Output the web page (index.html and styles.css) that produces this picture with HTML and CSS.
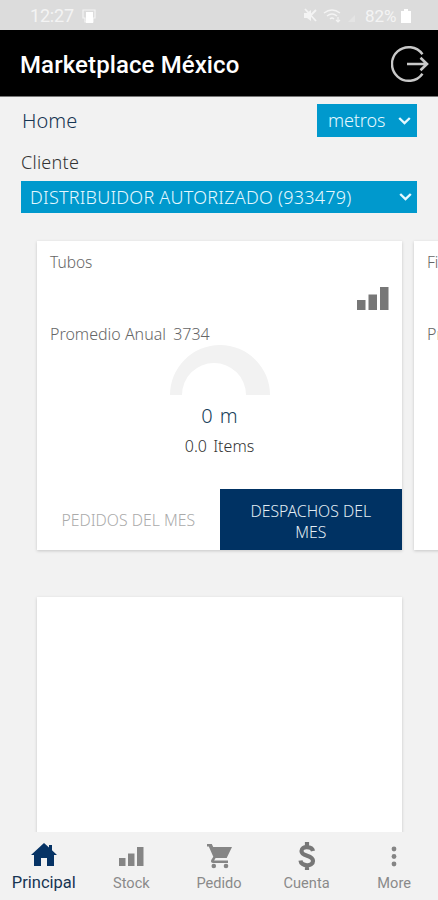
FILE: index.html
```html
<!DOCTYPE html>
<html lang="es">
<head>
<meta charset="utf-8">
<meta name="viewport" content="width=device-width, initial-scale=1">
<title>Marketplace México</title>
<link rel="stylesheet" href="styles.css">
</head>
<body>
<div class="app">
  <div class="status">
    <span class="clock">12:27</span>
    <svg class="note" width="16" height="17" viewBox="0 0 16 17"><path d="M2 2h12v8h-2v4H4v-4H2z" fill="none" stroke="#f4f4f4" stroke-width="1.2"/><path d="M5 4h7v11H5z" fill="#fff"/></svg>
    <svg class="signals" width="56" height="18" viewBox="0 0 56 18" fill="none" stroke="#f4f4f4"><path d="M1 6h3l4-3v11l-4-3H1z" fill="#f4f4f4" stroke="none"/><path d="M2 2l11 12M8 8l5-5" stroke-width="1.8"/><path d="M21 6q8-6 16 0M24 9q5-4 10 0M27 12q2-2 4 0" stroke-width="1.4"/><path d="M35 10v5m-2-2l2 2 2-2" stroke-width="1.2"/><path d="M45 15h7V8z" fill="#e4e4e4" stroke="none"/></svg>
    <span class="percent">82%</span>
    <svg class="battery" width="10" height="14" viewBox="0 0 10 14"><path d="M3 0h4v2h3v12H0V2h3z" fill="#fff"/></svg>
  </div>
  <header class="header">
    <h1 class="title">Marketplace México</h1>
    <svg class="logout" width="38" height="38" viewBox="0 0 38 38" fill="none" stroke="#c8c8c8" stroke-width="2.4"><path d="M31.500 9.300A16.800 16.800 0 1 0 31.500 28.700"/><path d="M16 19h20M29.500 12.800l6.500 6.200-6.500 6.200" stroke-width="2.6"/></svg>
  </header>
  <main class="content">
    <div class="row">
      <span class="home">Home</span>
      <div class="select unit"><span class="unit-text">metros</span><svg class="chevron" width="13" height="8" viewBox="0 0 13 8"><path d="M1.200 1l5.300 5 5.300-5"/></svg></div>
    </div>
    <div class="label"><span>Cliente</span></div>
    <div class="select client"><span class="client-text">DISTRIBUIDOR AUTORIZADO (933479)</span><svg class="chevron" width="13" height="8" viewBox="0 0 13 8"><path d="M1.200 1l5.300 5 5.300-5"/></svg></div>
    <div class="cards">
      <section class="card">
        <div class="name">Tubos</div>
        <svg class="bars" width="32" height="24" viewBox="0 0 32 24"><path d="M0 13h8.500v10H0zM11.500 7.500H20V23h-8.500zM23 0h8.500v23H23z"/></svg>
        <div class="average">Promedio Anual <span class="avg-number">3734</span></div>
        <svg class="gauge" width="100" height="50" viewBox="0 0 100 50"><path d="M0 50a50 50 0 0 1 100 0H76a32 32 0 0 0-64 0z"/></svg>
        <div class="amount">0 m</div>
        <div class="items">0.0 Items</div>
        <div class="tabs">
          <div class="tab"><span>PEDIDOS DEL MES</span></div>
          <div class="tab active"><span>DESPACHOS DEL MES</span></div>
        </div>
      </section>
      <section class="card">
        <div class="name">Fi</div>
        <div class="average second">Promedio Anual</div>
      </section>
    </div>
    <section class="card blank"></section>
  </main>
  <nav class="nav">
    <div class="item current"><svg width="26" height="24" viewBox="0 0 26 24"><path d="M13 0l5 4.500V2h3v5.200L26 12h-3v11h-7v-8h-6v8H3V12H0z"/></svg><span>Principal</span></div>
    <div class="item"><svg width="26" height="24" viewBox="0 0 26 24"><path d="M1 14h6.500v8H1zM10 9.500h6.500V22H10zM19 3h6.500v19H19z"/></svg><span>Stock</span></div>
    <div class="item"><svg width="26" height="26" viewBox="0 0 26 26"><path d="M1 1h4.800l1.400 3H26l-5.300 11H9.600l-1.500 2.400H22V20H7.200c-2 0-2.800-1.600-1.800-3.300l1.900-3L2.800 3.600H1z"/><circle cx="7.800" cy="23" r="2.300"/><circle cx="20" cy="23" r="2.300"/></svg><span>Pedido</span></div>
    <div class="item"><svg class="dollar" width="20" height="30" viewBox="0 0 20 30"><path d="M16 10C15 5 4.500 4.500 4.500 10c0 6 11.500 3.500 11.500 10C16 26 4 25.500 3.500 19.500M10 1v5M10 24v5"/></svg><span>Cuenta</span></div>
    <div class="item"><svg width="26" height="24" viewBox="0 0 26 24"><circle cx="13" cy="5" r="2.400"/><circle cx="13" cy="12.500" r="2.400"/><circle cx="13" cy="20" r="2.400"/></svg><span>More</span></div>
  </nav>
</div>
</body>
</html>
```
FILE: styles.css
```css
* { box-sizing: border-box; }
body { margin: 0; background: #f2f2f2; font-family: "Noto Sans", sans-serif; font-weight: 300; }
svg { display: block; flex: none; }
.app { width: 438px; height: 900px; display: flex; flex-direction: column; overflow: hidden; background: #f2f2f2; }
.status { height: 30px; flex: none; display: flex; align-items: center; padding: 2px 27px 0 30px; background: #dcdcdc; color: #f4f4f4; font: 400 18px/28px Roboto, sans-serif; }
.clock { width: 51px; letter-spacing: -.2px; }
.signals { margin-left: auto; margin-right: 6px; }
.percent { width: 36px; font-size: 17px; }
.header { height: 67px; flex: none; display: flex; align-items: center; justify-content: space-between; padding: 0 9px 0 20px; background: #000; border-bottom: 1px solid #777; }
.logout { margin-top: 1px; }
.title { margin: 4px 0 0; color: #fff; font: 500 24px/30px Roboto, sans-serif; letter-spacing: .1px; }
.content { flex: 1; min-height: 0; overflow: hidden; padding: 7px 0 0; }
.row { display: flex; justify-content: space-between; height: 33px; padding: 0 21px 0 22px; }
.home { color: #173552; font-size: 20px; line-height: 33px; }
.select { display: flex; align-items: center; justify-content: space-between; background: #0099cd; color: #e5f8ff; }
.chevron path { fill: none; stroke: #e5f8ff; stroke-width: 2.400; }
.unit { width: 100px; padding: 0 6px 0 11px; font-size: 18px; }
.unit-text { margin-top: -2px; letter-spacing: -.1px; }
.label { height: 44px; padding: 9px 22px 0 21px; color: #333; font-size: 18px; line-height: 32px; letter-spacing: .25px; }
.client { width: 396px; height: 32px; margin-left: 21px; padding: 0 5px 0 9px; font-size: 18px; letter-spacing: .24px; white-space: nowrap; }
.cards { display: flex; gap: 12px; padding: 28px 0 0 37px; }
.card { width: 365px; height: 309px; flex: none; display: flex; flex-direction: column; background: #fff; box-shadow: 0 1px 3px rgba(0, 0, 0, .18); color: #666; }
.name { height: 46px; padding: 8px 13px 0; font-size: 15.500px; line-height: 26px; }
.bars { align-self: flex-end; margin-right: 13px; fill: #777; }
.average { height: 34px; padding: 10px 13px 0; font-size: 16px; line-height: 26px; white-space: nowrap; }
.avg-number { margin-left: 3px; }
.second { margin-top: 24px; }
.gauge { align-self: center; fill: #f2f2f2; }
.amount { height: 32px; margin-top: 5px; text-align: center; color: #173f5a; font-size: 20px; line-height: 32px; word-spacing: 2px; }
.items { height: 26px; text-align: center; color: #333; font-size: 16px; line-height: 29px; word-spacing: 2px; }
.tabs { display: flex; height: 61px; margin-top: auto; }
.tab { flex: 1; display: flex; align-items: center; justify-content: center; padding-top: 2px; color: #aaa; text-align: center; font-size: 15.800px; line-height: 21px; }
.tab.active { padding-top: 5px; background: #003263; color: #e3edf4; }
.tab.active span { width: 140px; }
.blank { margin: 47px 0 0 37px; }
.nav { height: 68px; flex: none; display: flex; background: #f2f2f2; color: #8a8a8a; font-family: Roboto, sans-serif; font-weight: 400; font-size: 14.600px; }
.item { flex: 1; display: grid; grid-template-rows: 40px 24px; justify-items: center; align-items: center; padding-top: 3px; line-height: 24px; }
.item span { margin-top: -8px; }
.item svg { margin-top: 2px; fill: #858585; }
.item .dollar { margin-top: 1px; }
.item .dollar path { fill: none; stroke: #777; stroke-width: 4.200; }
.item.current { color: #173552; font-size: 16.500px; }
.item.current svg { margin-top: 0; fill: #063365; }
```
